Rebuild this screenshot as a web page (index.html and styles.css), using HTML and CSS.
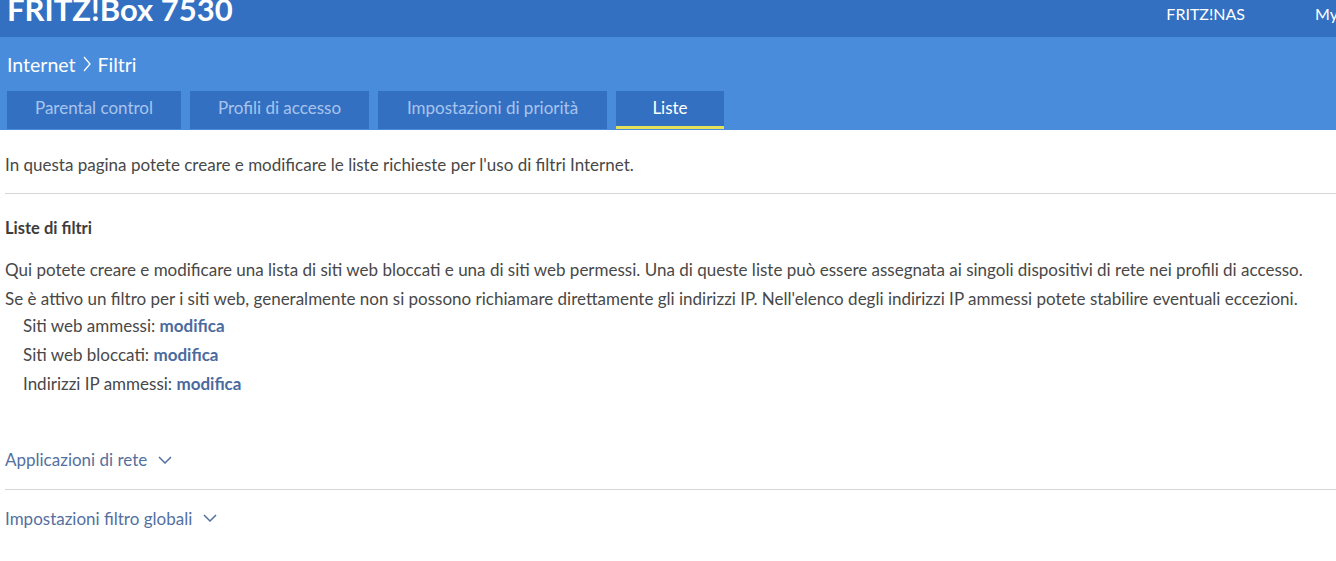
FILE: index.html
```html
<!doctype html>
<html lang="it">
    <head>
        <meta charset="utf-8">
        <title>FRITZ!Box 7530 - Filtri</title>
        <meta name="viewport" content="width=device-width, initial-scale=1">
        <link rel="stylesheet" href="styles.css">
    </head>
    <body>
        <header class="topbar">
            <div class="brand">FRITZ!Box 7530</div>
            <nav class="toplinks">
                <a href="#" class="nas">FRITZ!NAS</a>
                <a href="#" class="my">MyFRITZ!</a>
            </nav>
        </header>
        <div class="subbar">
            <div class="crumbs">
                <span>Internet</span>
                <svg class="sep" viewBox="0 0 8 16" width="8" height="16"><path d="M1 1l6 7-6 7"/></svg>
                <span>Filtri</span>
            </div>
            <ul class="tabs">
                <li class="tab t1">Parental control</li>
                <li class="tab t2">Profili di accesso</li>
                <li class="tab t3">Impostazioni di priorità</li>
                <li class="tab t4 active">Liste</li>
            </ul>
        </div>
        <main class="content">
            <p class="intro">In questa pagina potete creare e modificare le liste richieste per l'uso di filtri Internet.</p>
            <section class="block">
                <h2>Liste di filtri</h2>
                <p class="text">Qui potete creare e modificare una lista di siti web bloccati e una di siti web permessi. Una di queste liste può essere assegnata ai singoli dispositivi di rete nei profili di accesso.<br>Se è attivo un filtro per i siti web, generalmente non si possono richiamare direttamente gli indirizzi IP. Nell'elenco degli indirizzi IP ammessi potete stabilire eventuali eccezioni.</p>
                <ul class="lists">
                    <li>Siti web ammessi: <a href="#">modifica</a></li>
                    <li>Siti web bloccati: <a href="#">modifica</a></li>
                    <li>Indirizzi IP ammessi: <a href="#">modifica</a></li>
                </ul>
            </section>
            <div class="fold first">
                Applicazioni di rete
                <svg class="chev" viewBox="0 0 14 8" width="14" height="8"><path d="M1 1l6 6 6-6"/></svg>
            </div>
            <div class="fold">
                Impostazioni filtro globali
                <svg class="chev" viewBox="0 0 14 8" width="14" height="8"><path d="M1 1l6 6 6-6"/></svg>
            </div>
        </main>
    </body>
</html>
```

FILE: styles.css
```css
body {
	margin: 0;
	font-family: Lato, "Open Sans", sans-serif;
	color: #484848;
	background: #fff;
	overflow: hidden;
}

a {
	text-decoration: none;
}

.topbar {
	height: 37px;
	background: #3470c1;
	display: flex;
	justify-content: space-between;
	overflow: hidden;
}

.brand {
	color: #fff;
	font-weight: bold;
	font-size: 31px;
	line-height: 31px;
	margin-top: -6px;
	padding-left: 7px;
}

.toplinks {
	display: flex;
	padding-top: 4px;
}

.toplinks a {
	color: #fff;
	font-size: 16px;
	white-space: nowrap;
}

.toplinks .nas {
	margin-right: 70px;
}

.toplinks .my {
	width: 21px;
}

.subbar {
	height: 93px;
	background: #4a8cdc;
	display: flex;
	flex-direction: column;
}

.crumbs {
	color: #fff;
	font-size: 19.5px;
	padding: 0 0 0 7px;
	height: 54px;
	display: flex;
	align-items: center;
	gap: 7px;
}

.crumbs .sep {
	fill: none;
	stroke: #fff;
	stroke-width: 1.3;
}

.tabs {
	list-style: none;
	margin: 0;
	padding: 0 0 0 7px;
	display: flex;
	gap: 9px;
	height: 39px;
}

.tab {
	background: #3470c1;
	color: #a8c4ee;
	font-size: 17px;
	display: flex;
	align-items: center;
	justify-content: center;
	height: 38px;
	padding-bottom: 5px;
	box-sizing: border-box;
}

.t1 { width: 174px; }
.t2 { width: 179px; }
.t3 { width: 229px; }
.t4 { width: 108px; }

.tab.active {
	color: #fff;
	border-bottom: 3px solid #e4e05a;
	padding-bottom: 3px;
}

.content {
	padding: 0 0 0 5px;
	font-size: 17px;
	line-height: 29px;
}

.intro {
	margin: 0;
	padding: 20px 0 14px;
	border-bottom: 1px solid #d6d6d6;
}

.block h2 {
	font-size: 16.5px;
	font-weight: bold;
	line-height: 29px;
	color: #3c3c3c;
	margin: 20px 0 0;
}

.text {
	margin: 12px 0 0;
}

.lists {
	list-style: none;
	margin: -2px 0 0;
	padding: 0 0 0 18px;
}

.lists a {
	color: #4b6a9e;
	font-weight: bold;
}

.fold {
	color: #5470a0;
	display: flex;
	align-items: center;
	gap: 11px;
	height: 58px;
	padding-bottom: 2px;
	box-sizing: border-box;
}

.fold.first {
	margin-top: 34px;
	border-bottom: 1px solid #d6d6d6;
}

.chev {
	fill: none;
	stroke: #5470a0;
	stroke-width: 1.5;
}
```
